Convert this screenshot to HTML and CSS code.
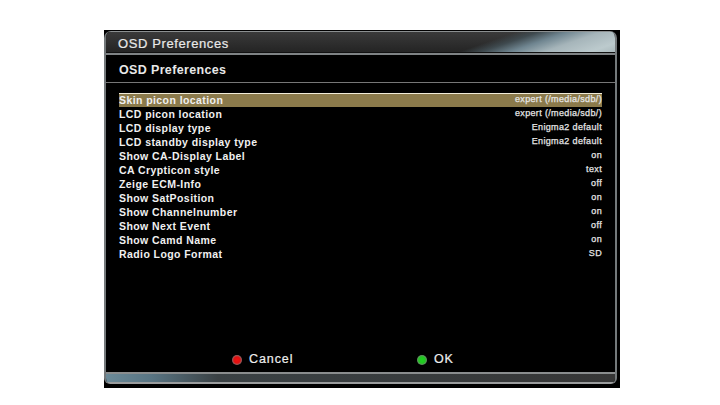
FILE: index.html
```html
<!DOCTYPE html>
<html lang="en">
<head>
<meta charset="utf-8">
<title>OSD Preferences</title>
<link rel="stylesheet" href="styles.css">
</head>
<body>
<div class="screen">
  <div class="frame">
    <div class="titlebar"><span class="title-text">OSD Preferences</span></div>
    <div class="content">
      <h1 class="heading">OSD Preferences</h1>
      <ul class="list">
        <li class="row selected"><span class="label">Skin picon location</span><span class="value">expert (/media/sdb/)</span></li>
        <li class="row"><span class="label">LCD picon location</span><span class="value">expert (/media/sdb/)</span></li>
        <li class="row"><span class="label">LCD display type</span><span class="value">Enigma2 default</span></li>
        <li class="row"><span class="label">LCD standby display type</span><span class="value">Enigma2 default</span></li>
        <li class="row"><span class="label">Show CA-Display Label</span><span class="value">on</span></li>
        <li class="row"><span class="label">CA Crypticon style</span><span class="value">text</span></li>
        <li class="row"><span class="label">Zeige ECM-Info</span><span class="value">off</span></li>
        <li class="row"><span class="label">Show SatPosition</span><span class="value">on</span></li>
        <li class="row"><span class="label">Show Channelnumber</span><span class="value">on</span></li>
        <li class="row"><span class="label">Show Next Event</span><span class="value">off</span></li>
        <li class="row"><span class="label">Show Camd Name</span><span class="value">on</span></li>
        <li class="row"><span class="label">Radio Logo Format</span><span class="value">SD</span></li>
      </ul>
      <div class="buttons">
        <div class="button cancel"><span class="dot dot-red"></span><span class="button-text">Cancel</span></div>
        <div class="button ok"><span class="dot dot-green"></span><span class="button-text">OK</span></div>
      </div>
    </div>
    <div class="bottombar"></div>
  </div>
</div>
</body>
</html>
```
FILE: styles.css
```css
* { box-sizing: border-box; }
html, body { margin: 0; padding: 0; background: #fff; }
body { width: 720px; height: 405px; overflow: hidden; font-family: "Liberation Sans", Arial, sans-serif; color: #f2f2f2; }
.screen { margin: 30px 0 0 104px; width: 516px; height: 358px; background: #000; padding: 1px 3px 4px 0; }
.frame { height: 100%; display: flex; flex-direction: column; border-radius: 7px 7px 6px 6px; background: #000; overflow: hidden; border: solid #74797b; border-width: 0 2px; }
.titlebar { height: 24px; flex: none; padding: 2px 0 0 12px; display: flex; align-items: center; color: #e8e8e8; background: linear-gradient(160.7deg, rgba(0,0,0,0) 0%, rgba(0,0,0,0) 72%, #3f4a4f 76%, #6f8590 81%, #a6b5ba 87%, #bccacd 95%, #a9b8bb 100%), linear-gradient(180deg, #3a3a3a 0%, #232323 100%); border-top: 1px solid #8b8f90; border-bottom: 2px solid #7f8385; box-shadow: inset 0 -1px 0 #111; }
.title-text { font-size: 13px; letter-spacing: 0.6px; -webkit-text-stroke: 0.2px #e8e8e8; }
.content { flex: 1; display: flex; flex-direction: column; min-height: 0; padding: 0 13px 0 13px; }
.heading { margin: 0 -13px; padding: 2px 0 0 13px; height: 28px; flex: none; font-size: 12.5px; font-weight: bold; line-height: 26px; letter-spacing: 0.35px; color: #e8e8e8; border-bottom: 1px solid #777; }
.list { list-style: none; margin: 10px 0 0; padding: 0; flex: 1; }
.row { height: 14px; display: flex; justify-content: space-between; align-items: center; }
.label { font-size: 10.5px; font-weight: bold; letter-spacing: 0.42px; color: #f0f0f0; }
.value { font-size: 9px; letter-spacing: 0.35px; color: #e6e6e6; padding-bottom: 2px; -webkit-text-stroke: 0.25px #e6e6e6; }
.selected { background: #8b7a4b; box-shadow: inset 0 1px 0 #f1ecd9; }
.buttons { height: 30px; flex: none; display: flex; padding: 4px 0 0 113px; align-items: center; }
.button { display: flex; align-items: center; gap: 7px; font-size: 12.5px; letter-spacing: 0.9px; color: #eee; -webkit-text-stroke: 0.2px #eee; }
.cancel { width: 185px; }
.dot { width: 10px; height: 10px; margin-top: 1px; border-radius: 50%; flex: none; }
.dot-red { background: radial-gradient(circle, #f01010 0%, #e01010 42%, #8a6a6a 72%, #777 100%); }
.dot-green { background: radial-gradient(circle, #20d020 0%, #20c820 42%, #6a8a6a 72%, #777 100%); }
.bottombar { height: 12px; flex: none; background: linear-gradient(90deg, #6b8a98 0%, #587482 9%, #3a4144 22%, #363636 100%); border-top: 2px solid #8a8d8e; border-bottom: 2px solid #9a9c9d; }
```
